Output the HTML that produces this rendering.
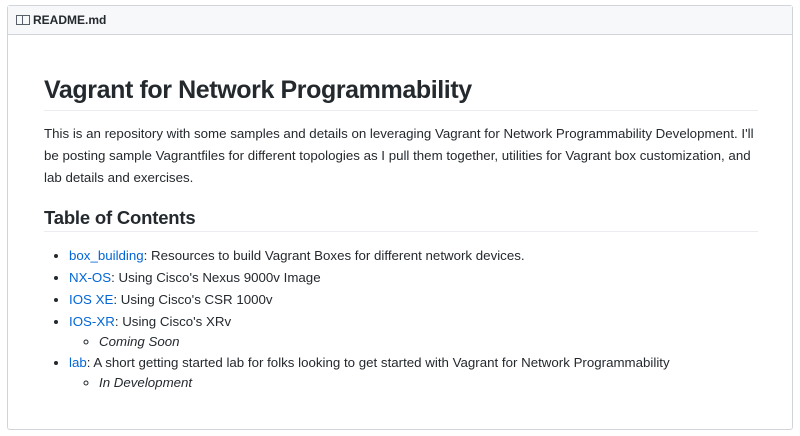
<!DOCTYPE html>
<html><head><style>
body{margin:0;background:#fff;font-family:"Liberation Sans",sans-serif;color:#24292e;}
.box{position:absolute;left:7px;top:5px;width:784px;height:423px;border:1px solid #d1d5da;border-radius:3px;}
.hd{height:28px;background:#f6f8fa;border-bottom:1px solid #d1d5da;font-size:12px;font-weight:bold;line-height:28px;padding-left:8px;}
.ic{display:inline-block;width:12px;height:8px;border:1px solid #586069;margin-right:3px;vertical-align:-1px;position:relative;}
.ic:after{content:"";position:absolute;left:5px;top:0;width:1px;height:8px;background:#586069;}
.c{position:absolute;left:36px;top:0;width:714px;font-size:13.3px;}
h1{position:absolute;top:66px;margin:0;font-size:25px;font-weight:bold;letter-spacing:-0.4px;width:714px;height:38px;border-bottom:1px solid #eaecef;line-height:36px;}
p{position:absolute;top:117px;margin:0;line-height:22px;font-size:13.3px;width:720px;}
h2{position:absolute;top:199px;margin:0;font-size:18.5px;font-weight:bold;letter-spacing:-0.2px;width:714px;height:26px;border-bottom:1px solid #eaecef;line-height:26px;}
ul{position:absolute;top:239px;margin:0;padding-left:25px;line-height:22px;}
ul ul{position:static;padding-left:30px;list-style:circle;line-height:20px;margin-top:-1px;}
li{margin:0;}
a{color:#0366d6;text-decoration:none}
i{font-style:italic}
</style></head><body>
<div class="box"><div class="hd"><span class="ic"></span>README.md</div>
<div class="c">
<h1>Vagrant for Network Programmability</h1>
<p>This is an repository with some samples and details on leveraging Vagrant for Network Programmability Development. I'll be posting sample Vagrantfiles for different topologies as I pull them together, utilities for Vagrant box customization, and lab details and exercises.</p>
<h2>Table of Contents</h2>
<ul>
<li><a>box_building</a>: Resources to build Vagrant Boxes for different network devices.</li>
<li><a>NX-OS</a>: Using Cisco's Nexus 9000v Image</li>
<li><a>IOS XE</a>: Using Cisco's CSR 1000v</li>
<li><a>IOS-XR</a>: Using Cisco's XRv<ul><li><i>Coming Soon</i></li></ul></li>
<li><a>lab</a>: A short getting started lab for folks looking to get started with Vagrant for Network Programmability<ul><li><i>In Development</i></li></ul></li>
</ul>
</div></div>
</body></html>
